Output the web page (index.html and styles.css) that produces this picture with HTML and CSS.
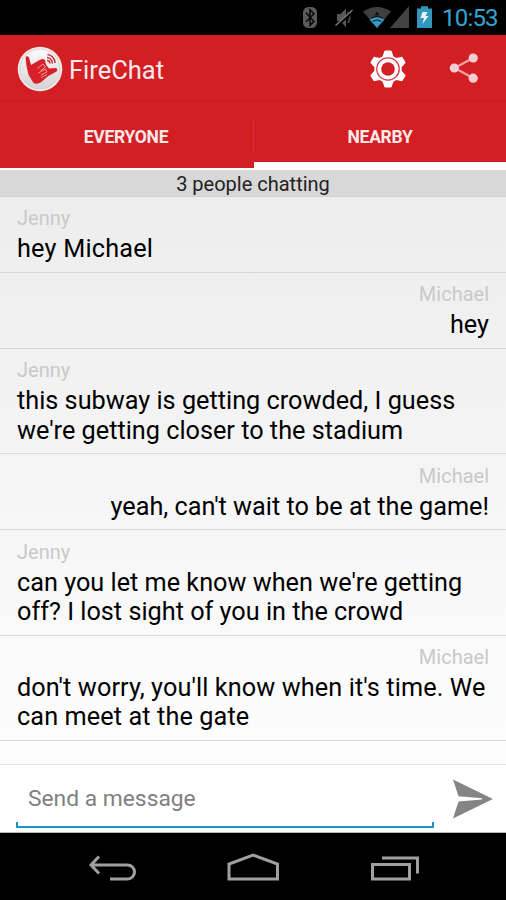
FILE: index.html
```html
<!DOCTYPE html>
<html lang="en">
<head>
<meta charset="utf-8">
<title>FireChat</title>
<link rel="stylesheet" href="styles.css">
</head>
<body>
<div class="phone">
  <div class="status">
    <svg class="status-icons" width="146" height="35" viewBox="0 0 146 35">
      <rect x="3" y="7" width="14" height="21" rx="5.5" fill="#5b5b5b"/>
      <path d="M6 12.8l8 8.600-4 4V9.800l4 4-8 8" fill="none" stroke="#080808" stroke-width="1.500"/>
      <path d="M37 14h3.500L46 8.500v19L40.500 21H37z" fill="#585858"/>
      <path d="M48 12q3.500 5.500 0 11" fill="none" stroke="#484848" stroke-width="1.800"/>
      <path d="M36 26.500L53.500 11" stroke="#000" stroke-width="3"/>
      <path d="M35.500 25.500L52.500 10" stroke="#777" stroke-width="1.600"/>
      <path d="M63 11.500Q77 2.500 91 11.500L77 28z" fill="#3f3f3f"/>
      <path d="M69.500 19.500Q77 14.500 84.500 19.500L77 28z" fill="#3298bf"/>
      <path d="M77 11.500l2.500 4h-5z" fill="#111"/>
      <path d="M71 18.300q6-3.500 12 0M73 21.500q4-3 8 0" fill="none" stroke="#111" stroke-width="1.100"/>
      <path d="M109 6v22H90z" fill="#424242"/>
      <path d="M117 8.500h4V6.200h7v2.300h4V28h-15z" fill="#3396bd"/>
      <path d="M122.500 12h5l-2 4h3l-6 8 1.500-6h-3.500z" fill="#e8f4f8"/>
    </svg>
    <span class="clock">10:53</span>
  </div>
  <header class="bar">
    <svg class="logo" width="46" height="46" viewBox="0 0 46 46">
      <defs><linearGradient id="disc" x1="0" y1="0" x2="0" y2="1"><stop offset="0" stop-color="#fafafa"/><stop offset="1" stop-color="#d5d5d5"/></linearGradient></defs>
      <circle cx="23" cy="23" r="22.300" fill="#f4e8e8"/>
      <circle cx="23" cy="23" r="20" fill="url(#disc)" stroke="#d0cccc" stroke-width=".8"/>
      <path d="M8.500 11.500q1.500-2.500 3.500 0l2 7.500 9-5.300q3-1.700 5 .3l1 4.500 3 4 7-.5q2.500 1.500.5 3.500L31 30.300l-7 6q-3.500 2.500-7.500.7l-5-8.300L9.500 20z" fill="#d9202a"/>
      <path d="M20.500 22.500l5.500-4.500 2.500 3-5 4M21.500 27l7-4 1.500 3-6 3M24 31.500l6-3" fill="none" stroke="#efaaaa" stroke-width=".9"/>
      <path d="M30 14.500a3 3 0 0 1 3 3M30 11.500a6 6 0 0 1 5.500 6M30.500 8.500a8.500 8.500 0 0 1 7.500 8.500" fill="none" stroke="#cd3038" stroke-width="1.500"/>
    </svg>
    <h1 class="title">FireChat</h1>
    <svg class="gear" width="38" height="40" viewBox="-19.5 -20.5 39 41">
      <g fill="#fff">
        <path id="tooth" d="M-5.500-13L-3.700-18.500Q-3.500-19-2.500-19H2.500Q3.500-19 3.700-18.500L5.500-13V0H-5.500z"/>
        <use href="#tooth" transform="rotate(60)"/><use href="#tooth" transform="rotate(120)"/><use href="#tooth" transform="rotate(180)"/><use href="#tooth" transform="rotate(240)"/><use href="#tooth" transform="rotate(300)"/>
        <circle r="14"/>
      </g>
      <circle r="11.500" fill="none" stroke="#d8333a" stroke-width="1.300"/>
      <circle r="7" fill="#d31f24"/>
    </svg>
    <svg class="share" width="30" height="32" viewBox="0 0 30 32">
      <path d="M24 6L5.500 16 24 26" fill="none" stroke="#f2a5af" stroke-width="2"/>
      <g fill="#f7cdd4"><circle cx="24.200" cy="6" r="4.600"/><circle cx="5.300" cy="16" r="4.600"/><circle cx="24.200" cy="26.200" r="4.600"/></g>
    </svg>
  </header>
  <nav class="tabs">
    <div class="tab everyone"><span>EVERYONE</span></div>
    <div class="tab nearby"><span>NEARBY</span></div>
  </nav>
  <div class="count"><span>3 people chatting</span></div>
  <main class="list">
    <div class="row greeting"><div class="name">Jenny</div><div class="msg">hey Michael</div></div>
    <div class="row own"><div class="name">Michael</div><div class="msg">hey</div></div>
    <div class="row"><div class="name">Jenny</div><div class="msg">this subway is getting crowded, I guess<br>we're getting closer to the stadium</div></div>
    <div class="row own"><div class="name">Michael</div><div class="msg">yeah, can't wait to be at the game!</div></div>
    <div class="row"><div class="name">Jenny</div><div class="msg">can you let me know when we're getting<br>off? I lost sight of you in the crowd</div></div>
    <div class="row own wrapped"><div class="name">Michael</div><div class="msg">don't worry, you'll know when it's time. We<br>can meet at the gate</div></div>
  </main>
  <footer class="compose">
    <div class="field"><span>Send a message</span></div>
    <svg class="send" width="42" height="40" viewBox="0 0 42 40"><path d="M1 .5L41 20 1 39.500 6.500 22.500 30 20.400V19.200L6.500 17.200z" fill="#858585"/></svg>
  </footer>
  <div class="navbar">
    <svg width="506" height="67" viewBox="0 0 506 67" fill="none" stroke="#a0a0a0" stroke-width="3">
      <path d="M91 32h36.500a7 7 0 0 1 0 14H110M99 23.500L91 32l8 8.500"/>
      <path d="M229 46V31L253 22l24.500 9v15z"/>
      <path d="M372.500 31.500h37V46h-37zM382 25h35.500v15.500"/>
    </svg>
  </div>
</div>
</body>
</html>
```
FILE: styles.css
```css
* { box-sizing: border-box; }
body { margin: 0; background: #000; font-family: Roboto, sans-serif; }
svg { display: block; flex: none; }
.phone { width: 506px; height: 900px; display: flex; flex-direction: column; overflow: hidden; white-space: nowrap; }
.status { height: 35px; flex: none; display: flex; justify-content: flex-end; padding-right: 9px; background: #000; }
.clock { width: 55px; margin-left: -3px; font-size: 24px; line-height: 36px; color: #33a5d2; letter-spacing: -.8px; }
.status-icons { margin-right: -1px; }
.bar { height: 67px; flex: none; display: flex; align-items: center; padding-left: 17px; background: #d31f24; border-bottom: 2px solid #c61d22; }
.title { margin: 4px 0 0 6px; width: 301px; font-size: 25.5px; font-weight: 400; color: #fbe9ea; }
.logo { margin-top: 3px; }
.gear { margin: 3px 0 0 -1px; }
.share { margin: 1px 0 0 42px; }
.tabs { height: 68px; flex: none; display: flex; background: #d31f24; }
.tab { flex: none; text-align: center; font-size: 17.5px; font-weight: 700; line-height: 70px; color: #fbe9ea; letter-spacing: -.3px; }
.everyone { width: 254px; padding-right: 2px; border-bottom: 2px solid #fff; background: linear-gradient(#d82c40, #d82c40) right 0 top 17px / 1px 34px no-repeat; }
.nearby { width: 252px; border-bottom: 8px solid #fff; }
.count { height: 27px; flex: none; background: #d8d8d8; text-align: center; font-size: 20px; line-height: 28px; color: #222; border-bottom: 1px solid #d0d0d0; }
.list { height: 567px; flex: none; background: linear-gradient(#ededed, #fdfdfd); }
.row { padding: 9.2px 17px 8.4px; border-bottom: 1px solid #d9d9d9; }
.name { font-size: 20px; line-height: 25px; color: #c9c9c9; }
.msg { font-size: 25.25px; line-height: 29.400px; padding-top: 3px; color: #000; }
.greeting .msg { letter-spacing: .2px; }
.own { text-align: right; }
.wrapped .msg { text-align: left; letter-spacing: .1px; }
.compose { height: 69px; flex: none; display: flex; align-items: flex-start; padding-left: 16px; background: #fff; border-top: 1px solid #e2e2e2; border-bottom: 1px solid #b8b8b8; }
.field { width: 418px; height: 63px; padding-left: 12px; line-height: 67px; font-size: 22.8px; color: #808080; border-bottom: 2px solid #1b93c7; background: linear-gradient(#1b93c7, #1b93c7) left bottom / 2px 4px no-repeat, linear-gradient(#1b93c7, #1b93c7) right bottom / 2px 4px no-repeat; }
.send { margin: 14px 0 0 18px; }
.navbar { height: 67px; flex: none; background: #000; }
```
